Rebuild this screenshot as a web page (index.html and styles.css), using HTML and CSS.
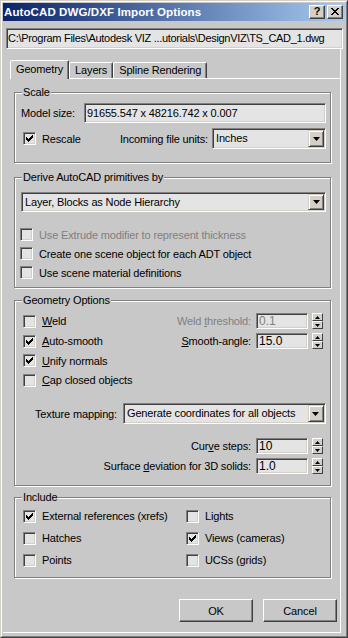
FILE: index.html
```html
<!DOCTYPE html>
<html>
<head>
<meta charset="utf-8">
<title>AutoCAD DWG/DXF Import Options</title>
<link rel="stylesheet" href="styles.css">
</head>
<body>
<div class="window">
  <div class="frame">
    <div class="titlebar">
      <span class="title">AutoCAD DWG/DXF Import Options</span>
      <span class="capbtn help">?</span>
      <span class="capbtn close"><svg width="8" height="7" viewBox="0 0 8 7"><path d="M0 0h2v1h1v1h2v-1h1v-1h2v1h-1v1h-1v1h-1v1h1v1h1v1h1v1h-2v-1h-1v-1h-2v1h-1v1h-2v-1h1v-1h1v-1h1v-1h-1v-1h-1v-1h-1z" fill="#000"/></svg></span>
    </div>
    <div class="client">
      <div class="pathfield">C:\Program Files\Autodesk VIZ ...utorials\DesignVIZ\TS_CAD_1.dwg</div>
      <div class="body">
        <div class="tabs">
          <div class="tab sel">Geometry</div>
          <div class="tab">Layers</div>
          <div class="tab">Spline Rendering</div>
        </div>
        <div class="panel">
          <div class="group g-scale">
            <span class="legend">Scale</span>
            <div class="row r-model">
              <span class="lbl">Model size:</span>
              <div class="field model">91655.547 x 48216.742 x 0.007</div>
            </div>
            <div class="row r-units">
              <span class="check on"><svg viewBox="0 0 7 7" width="7" height="7"><path d="M6 0h1v1h-1zM5 1h2v1h-2zM0 2h1v1h-1zM4 2h3v1h-3zM0 3h2v1h-2zM3 3h3v1h-3zM0 4h5v1h-5zM1 5h3v1h-3zM2 6h1v1h-1z"/></svg></span>
              <span class="clbl">Rescale</span>
              <span class="lbl units-lbl">Incoming file units:</span>
              <div class="combo units"><span class="val">Inches</span><span class="cbtn"><svg width="7" height="4" viewBox="0 0 7 4"><path d="M0 0h7l-3.5 4z"/></svg></span></div>
            </div>
          </div>

          <div class="group g-derive">
            <span class="legend">Derive AutoCAD primitives by</span>
            <div class="combo derive"><span class="val">Layer, Blocks as Node Hierarchy</span><span class="cbtn"><svg width="7" height="4" viewBox="0 0 7 4"><path d="M0 0h7l-3.5 4z"/></svg></span></div>
            <div class="crow first"><span class="check"></span><span class="clbl dis">Use Extrude modifier to represent thickness</span></div>
            <div class="crow"><span class="check"></span><span class="clbl">Create one scene object for each ADT object</span></div>
            <div class="crow"><span class="check"></span><span class="clbl">Use scene material definitions</span></div>
          </div>

          <div class="group g-geom">
            <span class="legend">Geometry Options</span>
            <div class="grow h20">
              <span class="check"></span><span class="clbl"><u>W</u>eld</span>
              <span class="lbl right dis">Weld <u>t</u>hreshold:</span>
              <div class="field num dis">0.1</div>
              <span class="spin"><span><svg width="5" height="3" viewBox="0 0 5 3"><path d="M2.5 0L5 3H0z"/></svg></span><span><svg width="5" height="3" viewBox="0 0 5 3"><path d="M0 0h5L2.5 3z"/></svg></span></span>
            </div>
            <div class="grow h20">
              <span class="check on"><svg viewBox="0 0 7 7" width="7" height="7"><path d="M6 0h1v1h-1zM5 1h2v1h-2zM0 2h1v1h-1zM4 2h3v1h-3zM0 3h2v1h-2zM3 3h3v1h-3zM0 4h5v1h-5zM1 5h3v1h-3zM2 6h1v1h-1z"/></svg></span><span class="clbl"><u>A</u>uto-smooth</span>
              <span class="lbl right"><u>S</u>mooth-angle:</span>
              <div class="field num">15.0</div>
              <span class="spin"><span><svg width="5" height="3" viewBox="0 0 5 3"><path d="M2.5 0L5 3H0z"/></svg></span><span><svg width="5" height="3" viewBox="0 0 5 3"><path d="M0 0h5L2.5 3z"/></svg></span></span>
            </div>
            <div class="grow h19">
              <span class="check on"><svg viewBox="0 0 7 7" width="7" height="7"><path d="M6 0h1v1h-1zM5 1h2v1h-2zM0 2h1v1h-1zM4 2h3v1h-3zM0 3h2v1h-2zM3 3h3v1h-3zM0 4h5v1h-5zM1 5h3v1h-3zM2 6h1v1h-1z"/></svg></span><span class="clbl"><u>U</u>nify normals</span>
            </div>
            <div class="grow h20">
              <span class="check"></span><span class="clbl"><u>C</u>ap closed objects</span>
            </div>
            <div class="texrow">
              <span class="lbl">Texture mapping:</span>
              <div class="combo tex"><span class="val">Generate coordinates for all objects</span><span class="cbtn"><svg width="7" height="4" viewBox="0 0 7 4"><path d="M0 0h7l-3.5 4z"/></svg></span></div>
            </div>
            <div class="grow h20 curve">
              <span class="lbl right">Cur<u>v</u>e steps:</span>
              <div class="field num">10</div>
              <span class="spin"><span><svg width="5" height="3" viewBox="0 0 5 3"><path d="M2.5 0L5 3H0z"/></svg></span><span><svg width="5" height="3" viewBox="0 0 5 3"><path d="M0 0h5L2.5 3z"/></svg></span></span>
            </div>
            <div class="grow h20">
              <span class="lbl right">Surface <u>d</u>eviation for 3D solids:</span>
              <div class="field num">1.0</div>
              <span class="spin"><span><svg width="5" height="3" viewBox="0 0 5 3"><path d="M2.5 0L5 3H0z"/></svg></span><span><svg width="5" height="3" viewBox="0 0 5 3"><path d="M0 0h5L2.5 3z"/></svg></span></span>
            </div>
          </div>

          <div class="group g-inc">
            <span class="legend">Include</span>
            <div class="incgrid">
              <div class="irow"><span class="check on"><svg viewBox="0 0 7 7" width="7" height="7"><path d="M6 0h1v1h-1zM5 1h2v1h-2zM0 2h1v1h-1zM4 2h3v1h-3zM0 3h2v1h-2zM3 3h3v1h-3zM0 4h5v1h-5zM1 5h3v1h-3zM2 6h1v1h-1z"/></svg></span><span class="clbl">External references (xrefs)</span></div>
              <div class="irow"><span class="check"></span><span class="clbl">Lights</span></div>
              <div class="irow"><span class="check"></span><span class="clbl">Hatches</span></div>
              <div class="irow"><span class="check on"><svg viewBox="0 0 7 7" width="7" height="7"><path d="M6 0h1v1h-1zM5 1h2v1h-2zM0 2h1v1h-1zM4 2h3v1h-3zM0 3h2v1h-2zM3 3h3v1h-3zM0 4h5v1h-5zM1 5h3v1h-3zM2 6h1v1h-1z"/></svg></span><span class="clbl">Views (cameras)</span></div>
              <div class="irow"><span class="check"></span><span class="clbl">Points</span></div>
              <div class="irow"><span class="check"></span><span class="clbl">UCSs (grids)</span></div>
            </div>
          </div>
        </div>
        <div class="buttons">
          <span class="btn">OK</span>
          <span class="btn">Cancel</span>
        </div>
      </div>
    </div>
  </div>
</div>
</body>
</html>
```
FILE: styles.css
```css
* { box-sizing: border-box; }
html, body { margin: 0; padding: 0; background: #c8c8c8; }
body {
  font-family: "Liberation Sans", Arial, sans-serif;
  font-size: 11px;
  letter-spacing: -0.15px;
  color: #000;
}
u { text-decoration: underline; text-underline-offset: 1px; }

.window {
  width: 348px;
  height: 638px;
  border: 1px solid;
  border-color: #d4d0c8 #404040 #404040 #d4d0c8;
  background: #c8c8c8;
}
.frame {
  height: 100%;
  border: 1px solid;
  border-color: #fff #808080 #808080 #fff;
  padding: 1px;
  display: flex;
  flex-direction: column;
}

/* title bar */
.titlebar {
  height: 18px;
  background: linear-gradient(to right, #0a246a, #a6caf0);
  display: flex;
  align-items: center;
  padding: 0 2px 0 1px;
}
.title {
  flex: 1;
  color: #fff;
  font-weight: bold;
  font-size: 11.5px;
  letter-spacing: 0.1px;
  white-space: nowrap;
}
.capbtn {
  width: 16px;
  height: 14px;
  background: #d4d0c8;
  border: 1px solid;
  border-color: #fff #404040 #404040 #fff;
  box-shadow: inset -1px -1px 0 #808080;
  display: flex;
  align-items: center;
  justify-content: center;
  font-weight: bold;
  font-size: 11px;
  line-height: 1;
  letter-spacing: 0;
}
.capbtn.help { padding-bottom: 1px; }
.capbtn.close { margin-left: 2px; padding-bottom: 1px; }

/* client */
.client {
  flex: 1;
  display: flex;
  flex-direction: column;
}
.pathfield {
  margin: 7px 2px 0 3px;
  height: 21px;
  background: #e4e4e4;
  border: 1px solid;
  border-color: #808080 #fff #fff #808080;
  box-shadow: inset 1px 1px 0 #404040, inset -1px -1px 0 #d4d0c8;
  padding: 0 0 0 1px;
  line-height: 19px;
  letter-spacing: -0.3px;
  white-space: nowrap;
  overflow: hidden;
}
.body {
  flex: 1;
  margin: 0 4px 2px 0;
  border-right: 1px solid #fff;
  border-bottom: 1px solid #fff;
  display: flex;
  flex-direction: column;
}

/* tabs */
.tabs {
  margin: 11px 0 0 7px;
  height: 18px;
  display: flex;
  align-items: flex-end;
  position: relative;
  z-index: 1;
}
.tab {
  height: 16px;
  border: 1px solid;
  border-bottom: none;
  border-color: #fff #404040 transparent #fff;
  box-shadow: inset -1px 0 0 #808080;
  border-radius: 2px 2px 0 0;
  padding: 0 5px;
  line-height: 15px;
  background: #c8c8c8;
}
.tab.sel {
  height: 19px;
  margin-bottom: -1px;
  padding: 0 5px;
  line-height: 17px;
}

.panel {
  margin: 0 0 0 7px;
  border-top: 1px solid #fff;
  padding: 0 0 0 4px;
  display: flex;
  flex-direction: column;
}

/* group boxes */
.group {
  position: relative;
  width: 317px;
  border: 1px solid #808080;
  box-shadow: inset 1px 1px 0 #fff, 1px 1px 0 #fff;
  padding: 0 4px 0 5px;
}
.legend {
  position: absolute;
  top: -7px;
  left: 7px;
  padding: 0 1px;
  line-height: 13px;
  background: #c8c8c8;
  white-space: nowrap;
}

.g-scale { margin-top: 13px; padding-top: 10px; padding-bottom: 13px; }
.g-derive { margin-top: 14px; padding-top: 14px; padding-bottom: 5px; }
.g-geom { margin-top: 12px; padding-top: 10px; padding-bottom: 9px; }
.g-inc { margin-top: 11px; padding-top: 7px; padding-bottom: 6px; }

.row { display: flex; align-items: center; }
.r-model { height: 20px; }
.r-model .lbl { margin-left: 1px; }
.r-units { height: 21px; margin-top: 5px; }
.r-units .check { margin-left: 3px; }
.units-lbl { margin-left: auto; }

.lbl { white-space: nowrap; }
.clbl { margin-left: 6px; white-space: nowrap; }
.dis { color: #808080; }

/* fields */
.field {
  background: #e4e4e4;
  border: 1px solid;
  border-color: #808080 #fff #fff #808080;
  box-shadow: inset 1px 1px 0 #404040, inset -1px -1px 0 #d4d0c8;
  padding-left: 2px;
  white-space: nowrap;
  overflow: hidden;
}
.field.model { margin-left: auto; width: 242px; height: 20px; line-height: 18px; }
.field.num { width: 52px; height: 16px; line-height: 14px; margin-left: 5px; font-size: 12px; letter-spacing: 0; }
.field.dis { color: #808080; }

/* combos */
.combo {
  display: flex;
  background: #e4e4e4;
  border: 1px solid;
  border-color: #808080 #fff #fff #808080;
  box-shadow: inset 1px 1px 0 #404040, inset -1px -1px 0 #d4d0c8;
  padding: 1px;
}
.combo .val { flex: 1; padding-left: 2px; white-space: nowrap; overflow: hidden; }
.combo .cbtn {
  width: 16px;
  background: #d4d0c8;
  border: 1px solid;
  border-color: #d4d0c8 #404040 #404040 #d4d0c8;
  box-shadow: inset 1px 1px 0 #fff, inset -1px -1px 0 #808080;
  display: flex;
  align-items: center;
  justify-content: center;
}
.combo.units { width: 114px; height: 21px; margin-left: 4px; }
.combo.units .val { line-height: 17px; }
.combo.derive { width: 305px; height: 20px; margin-left: 1px; }
.combo.derive .val { line-height: 16px; }
.combo.tex { width: 203px; height: 21px; margin-left: 6px; }
.combo.tex .val { line-height: 17px; }

/* checkboxes */
.check {
  flex: none;
  width: 13px;
  height: 13px;
  background: #e4e4e4;
  border: 1px solid;
  border-color: #808080 #fff #fff #808080;
  box-shadow: inset 1px 1px 0 #404040, inset -1px -1px 0 #d4d0c8;
  display: flex;
  align-items: center;
  justify-content: center;
}
.check svg { display: block; shape-rendering: crispEdges; }

.crow { height: 19px; display: flex; align-items: center; }
.crow.first { margin-top: 13px; }

.grow { display: flex; align-items: center; padding-left: 3px; padding-right: 3px; }
.grow.h20 { height: 20px; }
.grow.h19 { height: 19px; }
.grow .right { margin-left: auto; }
.grow.curve { margin-top: 12px; }

.texrow { display: flex; align-items: center; margin-top: 13px; padding-left: 15px; }

/* spinner */
.spin {
  margin-left: 4px;
  width: 11px;
  height: 16px;
  display: flex;
  flex-direction: column;
}
.spin span {
  flex: 1;
  background: #d4d0c8;
  border: 1px solid;
  border-color: #fff #404040 #404040 #fff;
  display: flex;
  align-items: center;
  justify-content: center;
}

/* include */
.incgrid {
  display: grid;
  grid-template-columns: 163px 1fr;
  grid-auto-rows: 22px;
  padding-left: 3px;
}
.irow { display: flex; align-items: center; }

/* buttons */
.buttons {
  display: flex;
  justify-content: flex-end;
  gap: 10px;
  margin: 21px 3px 0 0;
}
.btn {
  width: 74px;
  height: 23px;
  background: #c8c8c8;
  border: 1px solid;
  border-color: #fff #404040 #404040 #fff;
  box-shadow: inset -1px -1px 0 #808080;
  display: flex;
  align-items: center;
  justify-content: center;
}
```
